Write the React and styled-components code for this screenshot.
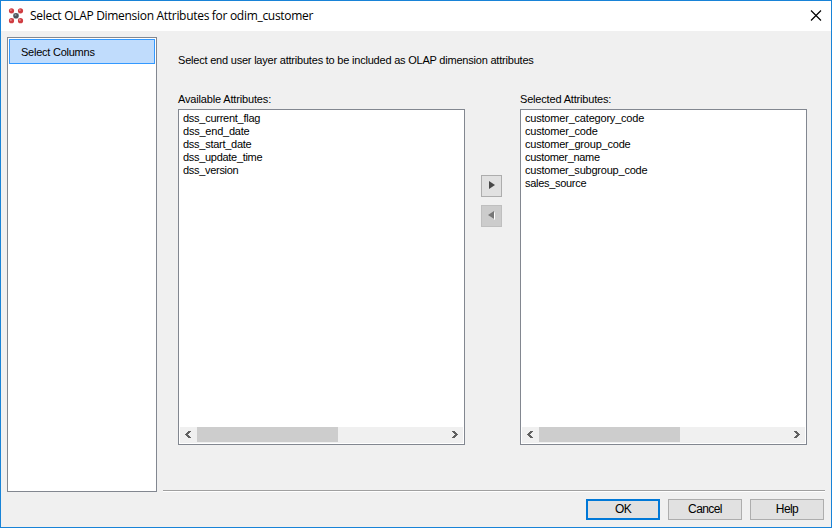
import React from "react";
import styled, { createGlobalStyle, css } from "styled-components";

const GlobalStyle = createGlobalStyle`
  *, *::before, *::after { box-sizing: border-box; }
  body { margin: 0; background: #f0f0f0; }
`;

const Dialog = styled.div`
  width: 832px;
  height: 528px;
  border: 1px solid #1883d7;
  background: #f0f0f0;
  color: #000;
  display: flex;
  flex-direction: column;
  overflow: hidden;
  font: 11px/13px "Liberation Sans", Arial, sans-serif;
`;

const TitleBar = styled.header`
  height: 30px;
  flex: none;
  background: #fff;
  display: flex;
  align-items: center;
  padding: 0 9px 0 7px;
`;

const Title = styled.h1`
  margin: 0 auto 0 6px;
  font: 400 12px/16px "Open Sans", "Noto Sans", sans-serif;
  letter-spacing: -0.3px;
  white-space: nowrap;
`;

const CloseButton = styled.button`
  width: 12px;
  height: 12px;
  padding: 0;
  border: 0;
  background: none;
  display: flex;
`;

const Body = styled.div`
  display: flex;
  padding: 6px 6px 0;
`;

const Sidebar = styled.nav`
  width: 150px;
  height: 455px;
  flex: none;
  border: 1px solid #828790;
  background: #fff;
  padding: 1px;
`;

const NavItem = styled.div`
  height: 25px;
  border: 1px solid #3399ff;
  background: #c0dcfc;
  padding: 6px 0 0 11px;
`;

const Page = styled.main`
  margin-left: 6px;
  width: 662px;
  height: 455px;
  border-bottom: 1px solid #fff;
  box-shadow: inset 0 -1px 0 #a0a0a0;
  padding: 17px 18px 0 15px;
`;

const Text = styled.span`
  display: block;
  width: max-content;
  white-space: nowrap;
  letter-spacing: ${(p) => p.$track || 0}px;
`;

const Columns = styled.div`
  display: flex;
  margin-top: 26px;
`;

const Column = styled.section`
  width: 287px;
`;

const ListBox = styled.div`
  margin-top: 3px;
  height: 336px;
  border: 1px solid #828790;
  background: #fff;
  padding: 1px;
  display: flex;
  flex-direction: column;
`;

const Items = styled.div`
  flex: 1;
  padding: 1px 0 0 3px;
`;

const ScrollBar = styled.div`
  height: 16px;
  display: flex;
  background: #f0f0f0;
`;

const ScrollArrow = styled.div`
  width: 17px;
  padding: 4px 0 0 ${(p) => (p.$end ? 6 : 5)}px;
  display: flex;
`;

const Track = styled.div`
  flex: 1;
`;

const Thumb = styled.div`
  width: 141px;
  height: 15px;
  background: #cdcdcd;
`;

const Movers = styled.div`
  width: 55px;
  padding: 82px 0 0 16px;
  display: flex;
  flex-direction: column;
  gap: 8px;
`;

const MoveButton = styled.button`
  width: 21px;
  height: 22px;
  border: 1px solid ${(p) => (p.disabled ? "#bfbfbf" : "#adadad")};
  background: ${(p) => (p.disabled ? "#cccccc" : "#e1e1e1")};
  display: flex;
  padding: 5px 0 0 ${(p) => (p.disabled ? 6 : 7)}px;
`;

const Footer = styled.footer`
  display: flex;
  justify-content: flex-end;
  gap: 8px;
  padding: 7px 7px 0 0;
`;

const Button = styled.button`
  width: 74px;
  height: 21px;
  padding: 0;
  border: 1px solid #adadad;
  background: #e1e1e1;
  color: #000;
  font: 12px/19px "Liberation Sans", Arial, sans-serif;
  letter-spacing: -0.6px;
  display: flex;
  justify-content: center;
  align-items: center;
  ${(p) => p.$primary && css`border: 2px solid #0078d7;`}
`;

const AppIcon = () => (
  <svg width="16" height="16" viewBox="0 0 16 16">
    <path d="M3 3 13 13M13 3 3 13" stroke="#d8dde0" />
    {[[3.5, 2.8], [12.5, 2.8], [3.5, 12.7], [12.5, 12.7]].map(([x, y]) => (
      <g key={`${x}-${y}`}>
        <circle cx={x} cy={y} r="2.6" fill="#cf3d42" />
        <circle cx={x - 0.6} cy={y - 0.7} r="0.9" fill="#ec9295" />
      </g>
    ))}
    <circle cx="8" cy="7.8" r="2.8" fill="#4b545c" />
    <circle cx="7.5" cy="7" r="1" fill="#88929a" />
  </svg>
);

const CloseIcon = () => (
  <svg width="12" height="12" viewBox="0 0 12 12">
    <path d="M1 0.5 11 10.5M11 0.5 1 10.5" stroke="#000" strokeWidth="1.15" />
  </svg>
);

const Chevron = ({ right }) => (
  <svg width="7" height="8" viewBox="0 0 7 8" shapeRendering="crispEdges">
    <path
      d={right ? "M0 0H3V1H4V2H5V3H6V4H5V5H4V6H3V7H0V6H1V5H2V4H3V3H2V2H1V1H0Z" : "M3 0H6V1H5V2H4V3H3V4H4V5H5V6H6V7H3V6H2V5H1V4H0V3H1V2H2V1H3Z"}
      fill="#606060"
    />
  </svg>
);

const Arrow = ({ left }) => (
  <svg width="8" height="9" viewBox="0 0 8 9">
    {left ? (
      <>
        <path d="M7 1V9L2 5Z" fill="#fff" />
        <path d="M6 0V8L0 4Z" fill="#777" />
      </>
    ) : (
      <path d="M0 0V8L6 4Z" fill="#484848" />
    )}
  </svg>
);

const available = [
  ["dss_current_flag", -0.26],
  ["dss_end_date", -0.22],
  ["dss_start_date", -0.27],
  ["dss_update_time", -0.3],
  ["dss_version", -0.3],
];

const selected = [
  ["customer_category_code", -0.2],
  ["customer_code", -0.2],
  ["customer_group_code", -0.21],
  ["customer_name", -0.32],
  ["customer_subgroup_code", -0.22],
  ["sales_source", -0.3],
];

const AttributeList = ({ label, track, items }) => (
  <Column>
    <Text $track={track}>{label}</Text>
    <ListBox>
      <Items>
        {items.map(([name, t]) => (
          <Text key={name} $track={t}>{name}</Text>
        ))}
      </Items>
      <ScrollBar>
        <ScrollArrow><Chevron /></ScrollArrow>
        <Track><Thumb /></Track>
        <ScrollArrow $end><Chevron right /></ScrollArrow>
      </ScrollBar>
    </ListBox>
  </Column>
);

export default function App() {
  return (
    <>
      <GlobalStyle />
      <Dialog>
        <TitleBar>
          <AppIcon />
          <Title>Select OLAP Dimension Attributes for odim_customer</Title>
          <CloseButton aria-label="Close"><CloseIcon /></CloseButton>
        </TitleBar>
        <Body>
          <Sidebar>
            <NavItem><Text $track={-0.24}>Select Columns</Text></NavItem>
          </Sidebar>
          <Page>
            <Text $track={-0.21}>Select end user layer attributes to be included as OLAP dimension attributes</Text>
            <Columns>
              <AttributeList label="Available Attributes:" track={-0.16} items={available} />
              <Movers>
                <MoveButton aria-label="Add"><Arrow /></MoveButton>
                <MoveButton aria-label="Remove" disabled><Arrow left /></MoveButton>
              </Movers>
              <AttributeList label="Selected Attributes:" track={-0.18} items={selected} />
            </Columns>
          </Page>
        </Body>
        <Footer>
          <Button $primary>OK</Button>
          <Button>Cancel</Button>
          <Button>Help</Button>
        </Footer>
      </Dialog>
    </>
  );
}
